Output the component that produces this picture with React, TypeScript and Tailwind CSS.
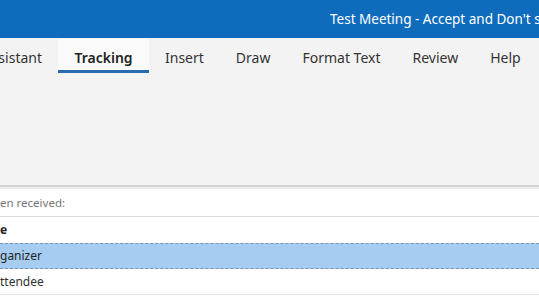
import React from "react";

const tabs = ["Insert", "Draw", "Format Text", "Review", "Help"];

export default function App() {
  return (
    <div
      className="w-[539px] h-[303px] overflow-hidden bg-white flex flex-col"
      style={{ fontFamily: '"Noto Sans", "Open Sans", sans-serif' }}
    >
      {/* title bar */}
      <div className="h-[38px] shrink-0 bg-[#0f6cbd] flex items-center pl-[330px] overflow-hidden whitespace-nowrap text-white text-[13.5px]">
        Test Meeting - Accept and Don't send a response
      </div>

      {/* ribbon */}
      <div className="h-[147px] shrink-0 bg-[#f3f3f3] flex flex-col">
        <div className="h-[35px] pt-[1px] flex items-stretch text-[14px] text-[#333] whitespace-nowrap">
          <div className="w-[58px] shrink-0 overflow-hidden flex justify-end items-center pt-[3px]">
            <span className="shrink-0 pr-4">Assistant</span>
          </div>
          <div className="relative shrink-0 w-[91px] flex justify-center items-center pt-[3px] bg-[#fafafa] font-semibold text-[#222]">
            Tracking
            <div className="absolute left-0 right-0 bottom-0 h-[3px] bg-[#2a6bab]" />
          </div>
          {tabs.map((t) => (
            <div key={t} className="shrink-0 px-4 flex items-center pt-[3px]">
              {t}
            </div>
          ))}
        </div>
      </div>
      <div className="h-[2px] shrink-0 bg-[#d2d2d2]" />
      <div className="h-[2px] shrink-0 bg-[#ececec]" />

      {/* list */}
      <div className="flex flex-col text-[12px] whitespace-nowrap">
        <div className="h-[28px] flex items-center text-[11.5px] text-[#767676] border-b border-[#dcdcdc]">
          en received:
        </div>
        <div className="h-[26px] flex items-center font-bold text-[#222]">e</div>
        <div className="h-[26px] flex items-center bg-[#a6cdf1] border-y border-dashed border-[#7d97ad] text-[#1f1f1f]">
          ganizer
        </div>
        <div className="h-[26px] flex items-center text-[#333] border-b border-[#e3e3e3]">
          ttendee
        </div>
      </div>
    </div>
  );
}
